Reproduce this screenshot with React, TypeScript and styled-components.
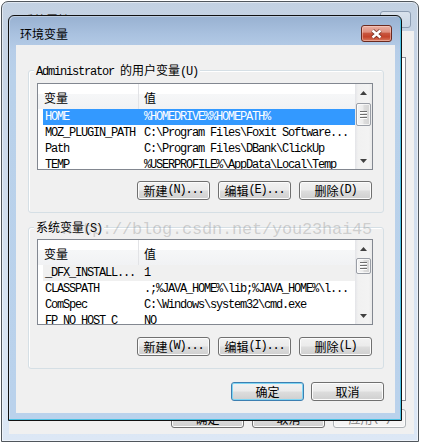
import React from 'react';
import styled, { createGlobalStyle } from 'styled-components';

const Global = createGlobalStyle`
  html, body { margin: 0; padding: 0; background: #ffffff; }
  body {
    width: 421px; height: 443px; overflow: hidden;
    font-family: "Noto Sans CJK SC", "Noto Sans", sans-serif;
    font-size: 12px; color: #000;
  }
  * { box-sizing: border-box; }
`;

const Desktop = styled.div`
  position: relative;
  width: 421px;
  height: 443px;
  overflow: hidden;
  background: #ffffff;
`;

/* ---------- text helpers ---------- */
const M = styled.span`
  font-family: "Liberation Mono", "DejaVu Sans Mono", monospace;
  font-size: 12px;
  letter-spacing: -1.2px;
  white-space: pre;
`;

/* ---------- background (inactive) window ---------- */
const BgWindow = styled.div`
  position: absolute;
  left: 1px;
  top: 1px;
  width: 418px;
  height: 441px;
  border: 1px solid #50565c;
  border-radius: 7px 7px 0 0;
  background: linear-gradient(to bottom, #c3d1e2 0%, #ccd9ea 30%, #d8e4f2 70%, #dce7f5 100%);
  box-shadow: inset 0 0 0 1px rgba(255, 255, 255, 0.5);
  display: flex;
  flex-direction: column;
  padding: 0 4px 7px 7px;
`;

const BgTitleBar = styled.div`
  height: 29px;
  display: flex;
  justify-content: space-between;
  align-items: flex-start;
`;

const BgTitle = styled.div`
  margin: 10px 0 0 13px;
  line-height: 16px;
  color: #3c3c3c;
`;

const BgClose = styled.div`
  width: 31px;
  height: 17px;
  margin: 9px 3px 0 0;
  border: 1px solid #8c9db2;
  border-radius: 3px;
  background: linear-gradient(to bottom, rgba(255,255,255,0.35), rgba(255,255,255,0.1));
`;

const BgClient = styled.div`
  flex: 1;
  background: #f0f0f0;
  display: flex;
  flex-direction: column;
  padding: 26px 8px 6px 6px;
`;

const BgPanel = styled.div`
  flex: 1;
  border: 1px solid #898c95;
  background: #ffffff;
`;

const BgButtonRow = styled.div`
  display: flex;
  justify-content: flex-end;
  gap: 8px;
  margin-top: 8px;
`;

/* ---------- buttons ---------- */
const Btn = styled.button<{ $default?: boolean; $disabled?: boolean }>`
  width: 73px;
  height: 19px;
  padding: 0;
  border: 1px solid ${p => (p.$default ? '#3c7fb1' : p.$disabled ? '#adb2b5' : '#707070')};
  border-radius: 3px;
  background: ${p =>
    p.$disabled
      ? '#f4f4f4'
      : 'linear-gradient(to bottom, #f2f2f2 0%, #ebebeb 48%, #dddddd 52%, #cfcfcf 100%)'};
  box-shadow: inset 0 0 0 1px ${p => (p.$default ? '#7fd5f3' : '#fcfcfc')};
  font-family: "Noto Sans CJK SC", sans-serif;
  font-size: 12px;
  line-height: 17px;
  color: ${p => (p.$disabled ? '#838383' : '#000')};
  display: flex;
  align-items: center;
  justify-content: center;
  white-space: pre;
`;

/* ---------- front (active) dialog ---------- */
const Dialog = styled.div`
  position: absolute;
  left: 8px;
  top: 15px;
  width: 394px;
  height: 406px;
  border: 1px solid #111;
  border-radius: 6px 6px 0 0;
  background: linear-gradient(to bottom, #98b1d1 0px, #a9c1df 18px, #b6cde8 34px, #b9d1ea 60px, #bad2ec 100%);
  box-shadow: inset -1px -1px 0 #4bc1e3, inset 1px 1px 0 rgba(255,255,255,0.35);
  display: flex;
  flex-direction: column;
  padding: 0 6px 7px 7px;
`;

const TitleBar = styled.div`
  height: 29px;
  display: flex;
  justify-content: space-between;
  align-items: flex-start;
`;

const Title = styled.div`
  margin: 10px 0 0 4px;
  line-height: 16px;
  font-size: 12px;
  color: #000;
`;

const CloseBtn = styled.div`
  width: 31px;
  height: 17px;
  margin: 9px 3px 0 0;
  border: 1px solid #6b2a1f;
  border-radius: 3px;
  background: linear-gradient(to bottom, #eab0a3 0%, #df9080 40%, #c8553e 50%, #c4432b 72%, #d87a5f 100%);
  box-shadow: inset 0 0 0 1px rgba(255, 220, 210, 0.45);
  display: flex;
  align-items: center;
  justify-content: center;
`;

const Client = styled.div`
  position: relative;
  flex: 1;
  background: #f0f0f0;
  display: flex;
  flex-direction: column;
  padding: 25px 11px 12px 12px;
`;

const GroupBox = styled.div<{ $padTop: number; $h: number; $mt?: number }>`
  position: relative;
  height: ${p => p.$h}px;
  margin-top: ${p => p.$mt ?? 0}px;
  border: 1px solid #d5dfe5;
  border-radius: 3px;
  box-shadow: inset 1px 1px 0 #ffffff;
  padding: ${p => p.$padTop}px 10px 12px 8px;
  display: flex;
  flex-direction: column;
`;

const Legend = styled.div`
  position: absolute;
  top: -9px;
  left: 5px;
  padding: 0 2px;
  background: #f0f0f0;
  line-height: 16px;
  white-space: pre;
`;

const ListView = styled.div<{ $h: number }>`
  height: ${p => p.$h}px;
  border: 1px solid #828790;
  background: #ffffff;
  display: flex;
  overflow: hidden;
`;

const ListMain = styled.div`
  flex: 1;
  display: flex;
  flex-direction: column;
  overflow: hidden;
`;

const Header = styled.div`
  height: 25px;
  flex: none;
  display: flex;
  background: linear-gradient(to bottom, #ffffff 0%, #ffffff 38%, #f6f7f8 40%, #f1f2f4 100%);
`;

const HeaderCell = styled.div<{ $w?: number; $pl: number; $divider?: boolean }>`
  ${p => (p.$w ? `width: ${p.$w}px; flex: none;` : 'flex: 1;')}
  padding: 6px 0 0 ${p => p.$pl}px;
  line-height: 16px;
  border-right: ${p => (p.$divider ? '1px solid #e2e3e6' : 'none')};
`;

const Row = styled.div<{ $sel?: boolean; $hot?: boolean }>`
  flex: none;
  height: 16px;
  margin-left: 5px;
  display: flex;
  background: ${p => (p.$sel ? '#3399ff' : p.$hot ? '#f0f0f0' : 'transparent')};
  color: ${p => (p.$sel ? '#ffffff' : '#000000')};
  line-height: 16px;
`;

const Cell = styled.div<{ $w?: number }>`
  ${p => (p.$w ? `width: ${p.$w}px; flex: none;` : 'flex: 1;')}
  padding-left: 2px;
  overflow: hidden;
  white-space: pre;
  font-family: "Liberation Mono", "DejaVu Sans Mono", monospace;
  font-size: 12px;
  letter-spacing: -1.2px;
`;

const ScrollBar = styled.div`
  width: 17px;
  flex: none;
  display: flex;
  flex-direction: column;
  background: linear-gradient(to right, #e3e4e8 0%, #f1f1f1 18%, #f3f3f3 80%, #eaeaea 100%);
`;

const Arrow = styled.div`
  height: 17px;
  flex: none;
  display: flex;
  align-items: center;
  justify-content: center;
`;

const Track = styled.div`
  flex: 1;
  display: flex;
  flex-direction: column;
`;

const Thumb = styled.div<{ $top: number; $h: number }>`
  margin: ${p => p.$top}px 1px 0 1px;
  height: ${p => p.$h}px;
  border: 1px solid #9a9ea6;
  border-radius: 2px;
  background: linear-gradient(to right, #f5f5f5 0%, #ececec 45%, #dcdcdc 55%, #d4d4d4 100%);
  box-shadow: inset 0 0 0 1px rgba(255,255,255,0.7);
  display: flex;
  flex-direction: column;
  align-items: center;
  justify-content: center;
  gap: 1px;
`;

const Grip = styled.div`
  width: 7px;
  height: 1px;
  background: #6f6f6f;
  box-shadow: 0 1px 0 #ffffff;
  margin-bottom: 1px;
`;

const ButtonRow = styled.div<{ $mt: number; $gap: number; $pr?: number }>`
  display: flex;
  justify-content: flex-end;
  gap: ${p => p.$gap}px;
  margin-top: ${p => p.$mt}px;
  padding-right: ${p => p.$pr ?? 0}px;
`;

const Watermark = styled.div`
  position: absolute;
  left: 46px;
  top: 175px;
  font-family: "Liberation Mono", "DejaVu Sans Mono", monospace;
  font-size: 17px;
  letter-spacing: -0.2px;
  line-height: 20px;
  color: rgba(120, 120, 120, 0.3);
  white-space: pre;
  pointer-events: none;
`;

/* ---------- icons ---------- */
const UpArrow = () => (
  <svg width="7" height="4" viewBox="0 0 7 4">
    <polygon points="0,4 3.5,0 7,4" fill="#404040" />
  </svg>
);
const DownArrow = () => (
  <svg width="7" height="4" viewBox="0 0 7 4">
    <polygon points="0,0 7,0 3.5,4" fill="#404040" />
  </svg>
);
const CloseX = () => (
  <svg width="13" height="10" viewBox="0 0 13 10">
    <path d="M2.5 1.5 L10.5 8.5 M10.5 1.5 L2.5 8.5" stroke="#5a2318" strokeOpacity="0.7" strokeWidth="4.2" />
    <path d="M2.5 1.5 L10.5 8.5 M10.5 1.5 L2.5 8.5" stroke="#ffffff" strokeWidth="2.4" />
  </svg>
);

/* ---------- data ---------- */
type Var = { name: string; value: string; sel?: boolean; hot?: boolean };

const userVars: Var[] = [
  { name: 'HOME', value: '%HOMEDRIVE%%HOMEPATH%', sel: true },
  { name: 'MOZ_PLUGIN_PATH', value: 'C:\\Program Files\\Foxit Software...' },
  { name: 'Path', value: 'C:\\Program Files\\DBank\\ClickUp' },
  { name: 'TEMP', value: '%USERPROFILE%\\AppData\\Local\\Temp' },
];

const sysVars: Var[] = [
  { name: '_DFX_INSTALL...', value: '1', hot: true },
  { name: 'CLASSPATH', value: '.;%JAVA_HOME%\\lib;%JAVA_HOME%\\l...' },
  { name: 'ComSpec', value: 'C:\\Windows\\system32\\cmd.exe' },
  { name: 'FP_NO_HOST_C', value: 'NO' },
];

const VarList: React.FC<{ h: number; rows: Var[]; thumbTop: number; thumbH: number }> = ({ h, rows, thumbTop, thumbH }) => (
  <ListView $h={h}>
    <ListMain>
      <Header>
        <HeaderCell $w={101} $pl={6} $divider>变量</HeaderCell>
        <HeaderCell $pl={5}>值</HeaderCell>
      </Header>
      {rows.map(r => (
        <Row key={r.name} $sel={r.sel} $hot={r.hot}>
          <Cell $w={99}>{r.name}</Cell>
          <Cell>{r.value}</Cell>
        </Row>
      ))}
    </ListMain>
    <ScrollBar>
      <Arrow><UpArrow /></Arrow>
      <Track>
        <Thumb $top={thumbTop} $h={thumbH}>
          <Grip /><Grip /><Grip />
        </Thumb>
      </Track>
      <Arrow><DownArrow /></Arrow>
    </ScrollBar>
  </ListView>
);

export default function App() {
  return (
    <Desktop>
      <Global />
      <BgWindow>
        <BgTitleBar>
          <BgTitle>系统属性</BgTitle>
          <BgClose />
        </BgTitleBar>
        <BgClient>
          <BgPanel />
          <BgButtonRow>
            <Btn>确定</Btn>
            <Btn>取消</Btn>
            <Btn $disabled>应用<M>(A)</M></Btn>
          </BgButtonRow>
        </BgClient>
      </BgWindow>

      <Dialog>
        <TitleBar>
          <Title>环境变量</Title>
          <CloseBtn><CloseX /></CloseBtn>
        </TitleBar>
        <Client>
          <GroupBox $padTop={12} $h={143}>
            <Legend><M>Administrator </M>的用户变量<M>(U)</M></Legend>
            <VarList h={87} rows={userVars} thumbTop={2} thumbH={23} />
            <ButtonRow $mt={11} $gap={8} $pr={1}>
              <Btn>新建<M>(N)...</M></Btn>
              <Btn>编辑<M>(E)...</M></Btn>
              <Btn>删除<M>(D)</M></Btn>
            </ButtonRow>
          </GroupBox>

          <GroupBox $padTop={11} $h={142} $mt={14}>
            <Legend>系统变量<M>(S)</M></Legend>
            <VarList h={86} rows={sysVars} thumbTop={1} thumbH={16} />
            <ButtonRow $mt={12} $gap={8} $pr={1}>
              <Btn>新建<M>(W)...</M></Btn>
              <Btn>编辑<M>(I)...</M></Btn>
              <Btn>删除<M>(L)</M></Btn>
            </ButtonRow>
          </GroupBox>

          <ButtonRow $mt={13} $gap={7}>
            <Btn $default>确定</Btn>
            <Btn>取消</Btn>
          </ButtonRow>

          <Watermark>http://blog.csdn.net/you23hai45</Watermark>
        </Client>
      </Dialog>
    </Desktop>
  );
}
